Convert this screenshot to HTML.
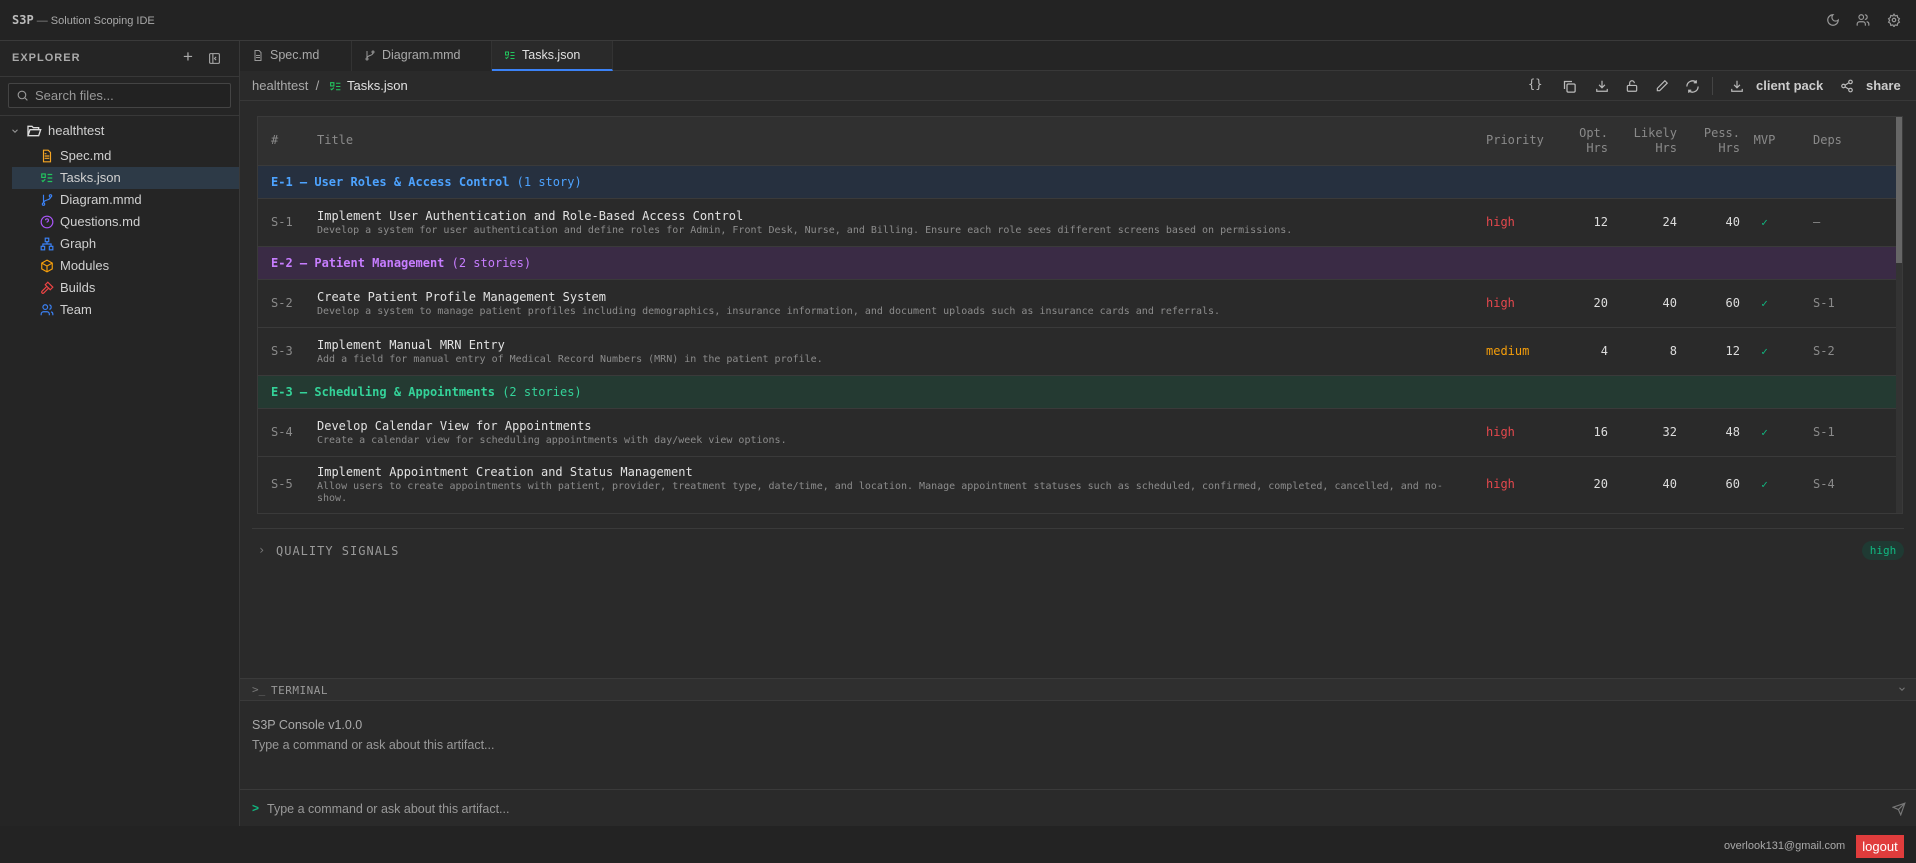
<!DOCTYPE html>
<html><head><meta charset="utf-8"><style>
*{box-sizing:border-box;margin:0;padding:0}
body{width:1916px;height:863px;background:#232323;font-family:"Liberation Sans",sans-serif;color:#ccc;position:relative;overflow:hidden}
.a{position:absolute}
svg{display:block}
.tr{position:absolute;left:0;height:22px;line-height:22px;font-size:13px;color:#d0d0d0;width:239px}
.tr svg{position:absolute;left:40px;top:4px}
.tr span{position:absolute;left:60px}
.tab{position:absolute;top:0;height:30px;line-height:29px;font-size:12.5px;color:#aaa;border-right:1px solid #333;background:#252525}
.tab svg{position:absolute;top:8px;left:12px}
.tab span{position:absolute;left:30px}
table{border-collapse:collapse;width:100%;font-family:"DejaVu Sans Mono","Liberation Mono",monospace}
td{vertical-align:middle}
.hdr td{color:#8a8a8a;font-size:12px;line-height:15px;height:48px}
.ep td{font-size:12px;font-weight:bold;height:33px;padding-left:13px;border-top:1px solid #3a3a3a}
.ep span{font-weight:normal}
.st td{border-top:1px solid #3a3a3a;height:48px}
.t1{font-size:12px;color:#e2e2e2;line-height:16px}
.t2{font-size:10px;color:#8c8c8c;line-height:12px;margin-top:1px}
.num{text-align:right;font-size:12px;color:#ddd}
.hi{color:#e5484d;font-size:12px}.me{color:#f59e0b;font-size:12px}
.ck{color:#10b981;text-align:center;font-size:11px}
.dp{color:#8a8a8a;font-size:12px;padding-left:24px}
.id{color:#8a8a8a;font-size:12px;padding-left:13px}
</style></head><body>

<div class="a" style="left:0;top:0;width:1916px;height:41px;border-bottom:1px solid #3a3a3a">
  <div class="a" style="left:12px;top:13px;font-size:11px;color:#aaa;white-space:nowrap"><b style="font-family:'DejaVu Sans Mono',monospace;color:#bbb;font-size:12px">S3P</b> <span style="color:#888">—</span> Solution Scoping IDE</div>
  <svg class="a" style="left:1826px;top:13px" width="14" height="14" viewBox="0 0 24 24" fill="none" stroke="#999" stroke-width="2" stroke-linecap="round"><path d="M12 3a6 6 0 0 0 9 9 9 9 0 1 1-9-9z"/></svg>
  <svg class="a" style="left:1856px;top:13px" width="14" height="14" viewBox="0 0 24 24" fill="none" stroke="#999" stroke-width="2" stroke-linecap="round"><circle cx="9" cy="7" r="4"/><path d="M2 21v-2a4 4 0 0 1 4-4h6a4 4 0 0 1 4 4v2M16 3.1a4 4 0 0 1 0 7.8M22 21v-2a4 4 0 0 0-3-3.9"/></svg>
  <svg class="a" style="left:1887px;top:13px" width="14" height="14" viewBox="0 0 24 24" fill="none" stroke="#999" stroke-width="2"><circle cx="12" cy="12" r="3"/><path d="M12 2l2 3 3.5-.8.8 3.5 3 2-1.8 3 1.8 3-3 2-.8 3.5-3.5-.8-2 3-2-3-3.5.8-.8-3.5-3-2 1.8-3-1.8-3 3-2 .8-3.5 3.5.8z"/></svg>
</div>

<div class="a" style="left:0;top:41px;width:240px;height:785px;background:#252525;border-right:1px solid #383838">
  <div class="a" style="left:12px;top:11px;font-size:11px;font-weight:bold;letter-spacing:1px;color:#aaa">EXPLORER</div>
  <div class="a" style="left:183px;top:6px;font-size:17px;color:#aaa">+</div>
  <svg class="a" style="left:208px;top:11px" width="13" height="13" viewBox="0 0 24 24" fill="none" stroke="#aaa" stroke-width="2"><rect x="3" y="3" width="18" height="18" rx="2"/><path d="M9 3v18M15 9l-3 3 3 3"/></svg>
  <div class="a" style="left:0;top:35px;width:239px;height:1px;background:#383838"></div>
  <div class="a" style="left:8px;top:42px;width:223px;height:25px;border:1px solid #444;background:#222;border-radius:2px"></div>
  <svg class="a" style="left:16px;top:48px" width="13" height="13" viewBox="0 0 24 24" fill="none" stroke="#999" stroke-width="2"><circle cx="11" cy="11" r="7"/><path d="M21 21l-5-5"/></svg>
  <div class="a" style="left:35px;top:47px;font-size:13px;color:#999">Search files...</div>
  <div class="a" style="left:0;top:74px;width:239px;height:1px;background:#383838"></div>

  <div class="tr" style="top:79px"><svg style="left:10px;top:6px" width="10" height="10" viewBox="0 0 24 24" fill="none" stroke="#999" stroke-width="2.5"><path d="M6 9l6 6 6-6"/></svg><svg style="left:26px;top:3px" width="16" height="16" viewBox="0 0 24 24" fill="none" stroke="#ddd" stroke-width="2"><path d="M3 19V5h6l2 2h8v3M3 19l3-9h16l-3 9z"/></svg><span style="left:48px">healthtest</span></div>
  <div class="tr" style="top:104px"><svg width="14" height="14" viewBox="0 0 24 24" fill="none" stroke="#f5a524" stroke-width="2"><path d="M14 2H6v20h12V6z M8 12h8M8 16h8M8 8h3"/></svg><span>Spec.md</span></div>
  <div class="tr" style="top:126px;left:12px;width:227px;background:#2d3a47"><svg style="left:28px" width="14" height="14" viewBox="0 0 24 24" fill="none" stroke="#22c55e" stroke-width="2"><path d="M3 5h6v6H3zM13 6h8M13 12h8M13 18h8M3 16l2 2 4-4"/></svg><span style="left:48px">Tasks.json</span></div>
  <div class="tr" style="top:148px"><svg width="14" height="14" viewBox="0 0 24 24" fill="none" stroke="#3b82f6" stroke-width="2"><circle cx="6" cy="19" r="2"/><circle cx="18" cy="5" r="2"/><path d="M6 3v14M18 7c0 6-12 4-12 10"/></svg><span>Diagram.mmd</span></div>
  <div class="tr" style="top:170px"><svg width="14" height="14" viewBox="0 0 24 24" fill="none" stroke="#a855f7" stroke-width="2"><circle cx="12" cy="12" r="10"/><path d="M9.5 9a2.5 2.5 0 1 1 3.5 2.3c-.7.4-1 1-1 1.7M12 17h.01"/></svg><span>Questions.md</span></div>
  <div class="tr" style="top:192px"><svg width="14" height="14" viewBox="0 0 24 24" fill="none" stroke="#3b82f6" stroke-width="2"><rect x="9" y="2" width="6" height="6"/><rect x="2" y="16" width="6" height="6"/><rect x="16" y="16" width="6" height="6"/><path d="M12 8v4M5 16v-4h14v4"/></svg><span>Graph</span></div>
  <div class="tr" style="top:214px"><svg width="14" height="14" viewBox="0 0 24 24" fill="none" stroke="#f59e0b" stroke-width="2"><path d="M12 2l9 5v10l-9 5-9-5V7zM3 7l9 5 9-5M12 12v10"/></svg><span>Modules</span></div>
  <div class="tr" style="top:236px"><svg width="14" height="14" viewBox="0 0 24 24" fill="none" stroke="#ef4444" stroke-width="2"><path d="M15 12l-8.5 8.5a2 2 0 0 1-3-3L12 9M17.6 15L22 10.6 13.4 2 9 6.4z"/></svg><span>Builds</span></div>
  <div class="tr" style="top:258px"><svg width="14" height="14" viewBox="0 0 24 24" fill="none" stroke="#3b82f6" stroke-width="2"><circle cx="9" cy="7" r="4"/><path d="M2 21v-2a4 4 0 0 1 4-4h6a4 4 0 0 1 4 4v2M16 3.1a4 4 0 0 1 0 7.8M22 21v-2a4 4 0 0 0-3-3.9"/></svg><span>Team</span></div>
</div>

<div class="a" style="left:240px;top:41px;width:1676px;height:785px;background:#2a2a2a">
  <div class="a" style="left:0;top:0;width:1676px;height:30px;background:#252525;border-bottom:1px solid #383838"></div>
  <div class="tab" style="left:0;width:112px"><svg width="12" height="13" viewBox="0 0 24 24" fill="none" stroke="#999" stroke-width="2"><path d="M14 2H6v20h12V6zM8 12h8M8 16h8"/></svg><span>Spec.md</span></div>
  <div class="tab" style="left:112px;width:140px"><svg width="12" height="13" viewBox="0 0 24 24" fill="none" stroke="#999" stroke-width="2"><circle cx="6" cy="19" r="2"/><circle cx="18" cy="5" r="2"/><path d="M6 3v14M18 7c0 6-12 4-12 10"/></svg><span>Diagram.mmd</span></div>
  <div class="tab" style="left:252px;width:121px;background:#2a2a2a;color:#e0e0e0;border-bottom:2px solid #3b82f6"><svg width="12" height="13" viewBox="0 0 24 24" fill="none" stroke="#22c55e" stroke-width="2"><path d="M3 5h6v6H3zM13 6h8M13 12h8M13 18h8M3 16l2 2 4-4"/></svg><span>Tasks.json</span></div>

  <div class="a" style="left:0;top:30px;width:1676px;height:30px;border-bottom:1px solid #383838"></div>
  <div class="a" style="left:12px;top:37px;font-size:13px;color:#aaa;white-space:nowrap">healthtest &nbsp;/&nbsp;</div>
  <svg class="a" style="left:89px;top:39px" width="13" height="13" viewBox="0 0 24 24" fill="none" stroke="#22c55e" stroke-width="2"><path d="M3 5h6v6H3zM13 6h8M13 12h8M13 18h8M3 16l2 2 4-4"/></svg>
  <div class="a" style="left:107px;top:37px;font-size:13px;color:#e0e0e0">Tasks.json</div>

  <div class="a" style="left:1288px;top:36px;font-size:12px;color:#bbb;font-family:'DejaVu Sans Mono',monospace">{}</div>
  <svg class="a" style="left:1322px;top:38px" width="15" height="15" viewBox="0 0 24 24" fill="none" stroke="#bbb" stroke-width="2"><rect x="8" y="8" width="13" height="13" rx="2"/><path d="M4 16V4h12"/></svg>
  <svg class="a" style="left:1355px;top:38px" width="14" height="14" viewBox="0 0 24 24" fill="none" stroke="#bbb" stroke-width="2"><path d="M12 3v12M7 10l5 5 5-5M3 17v4h18v-4"/></svg>
  <svg class="a" style="left:1385px;top:38px" width="14" height="14" viewBox="0 0 24 24" fill="none" stroke="#bbb" stroke-width="2"><rect x="4" y="11" width="16" height="10" rx="2"/><path d="M8 11V7a4 4 0 0 1 8 0"/></svg>
  <svg class="a" style="left:1415px;top:38px" width="14" height="14" viewBox="0 0 24 24" fill="none" stroke="#bbb" stroke-width="2"><path d="M17 3l4 4L8 20H4v-4z"/></svg>
  <svg class="a" style="left:1445px;top:38px" width="15" height="15" viewBox="0 0 24 24" fill="none" stroke="#bbb" stroke-width="2"><path d="M21 12a9 9 0 0 1-15.5 6.2M3 12a9 9 0 0 1 15.5-6.2M18 2v4h-4M6 22v-4h4"/></svg>
  <div class="a" style="left:1472px;top:36px;width:1px;height:18px;background:#444"></div>
  <svg class="a" style="left:1490px;top:38px" width="14" height="14" viewBox="0 0 24 24" fill="none" stroke="#bbb" stroke-width="2"><path d="M12 3v12M7 10l5 5 5-5M3 17v4h18v-4"/></svg>
  <div class="a" style="left:1516px;top:37px;font-size:13px;font-weight:bold;color:#ccc">client pack</div>
  <svg class="a" style="left:1600px;top:38px" width="14" height="14" viewBox="0 0 24 24" fill="none" stroke="#bbb" stroke-width="2"><circle cx="18" cy="5" r="3"/><circle cx="6" cy="12" r="3"/><circle cx="18" cy="19" r="3"/><path d="M8.6 13.5l6.8 4M15.4 6.5l-6.8 4"/></svg>
  <div class="a" style="left:1626px;top:37px;font-size:13px;font-weight:bold;color:#ccc">share</div>

  <div class="a" style="left:17px;top:75px;width:1646px;height:398px;border:1px solid #3a3a3a;background:#2a2a2a;overflow:hidden">
    <div class="a" style="left:1638px;top:0;width:6px;height:396px;background:#333"></div>
    <div class="a" style="left:1638px;top:0;width:6px;height:146px;background:#666"></div>
    <table style="width:1638px;table-layout:fixed">
      <colgroup><col style="width:59px"><col style="width:1169px"><col style="width:80px"><col style="width:42px"><col style="width:69px"><col style="width:63px"><col style="width:49px"><col></colgroup>
      <tr class="hdr" style="background:#303030"><td class="id">#</td><td>Title</td><td>Priority</td><td class="num" style="color:#8a8a8a">Opt.<br>Hrs</td><td class="num" style="color:#8a8a8a">Likely<br>Hrs</td><td class="num" style="color:#8a8a8a">Pess.<br>Hrs</td><td style="text-align:center">MVP</td><td style="padding-left:24px">Deps</td></tr>
      <tr class="ep" style="background:#26303f;color:#4da3ff"><td colspan="8">E-1 — User Roles &amp; Access Control <span>(1 story)</span></td></tr>
      <tr class="st"><td class="id">S-1</td><td><div class="t1">Implement User Authentication and Role-Based Access Control</div><div class="t2">Develop a system for user authentication and define roles for Admin, Front Desk, Nurse, and Billing. Ensure each role sees different screens based on permissions.</div></td><td class="hi">high</td><td class="num">12</td><td class="num">24</td><td class="num">40</td><td class="ck">✓</td><td class="dp">—</td></tr>
      <tr class="ep" style="background:#3a2b45;color:#c77dff"><td colspan="8">E-2 — Patient Management <span>(2 stories)</span></td></tr>
      <tr class="st"><td class="id">S-2</td><td><div class="t1">Create Patient Profile Management System</div><div class="t2">Develop a system to manage patient profiles including demographics, insurance information, and document uploads such as insurance cards and referrals.</div></td><td class="hi">high</td><td class="num">20</td><td class="num">40</td><td class="num">60</td><td class="ck">✓</td><td class="dp">S-1</td></tr>
      <tr class="st"><td class="id">S-3</td><td><div class="t1">Implement Manual MRN Entry</div><div class="t2">Add a field for manual entry of Medical Record Numbers (MRN) in the patient profile.</div></td><td class="me">medium</td><td class="num">4</td><td class="num">8</td><td class="num">12</td><td class="ck">✓</td><td class="dp">S-2</td></tr>
      <tr class="ep" style="background:#243a32;color:#34d399"><td colspan="8">E-3 — Scheduling &amp; Appointments <span>(2 stories)</span></td></tr>
      <tr class="st"><td class="id">S-4</td><td><div class="t1">Develop Calendar View for Appointments</div><div class="t2">Create a calendar view for scheduling appointments with day/week view options.</div></td><td class="hi">high</td><td class="num">16</td><td class="num">32</td><td class="num">48</td><td class="ck">✓</td><td class="dp">S-1</td></tr>
      <tr class="st"><td class="id">S-5</td><td style="height:56px;padding-right:40px"><div class="t1">Implement Appointment Creation and Status Management</div><div class="t2">Allow users to create appointments with patient, provider, treatment type, date/time, and location. Manage appointment statuses such as scheduled, confirmed, completed, cancelled, and no-show.</div></td><td class="hi">high</td><td class="num">20</td><td class="num">40</td><td class="num">60</td><td class="ck">✓</td><td class="dp">S-4</td></tr>
    </table>
  </div>

  <div class="a" style="left:12px;top:487px;width:1652px;height:1px;background:#3a3a3a"></div>
  <div class="a" style="left:18px;top:502px;font-size:12px;color:#777;font-family:'DejaVu Sans Mono',monospace">›</div>
  <div class="a" style="left:36px;top:503px;font-size:12px;color:#999;letter-spacing:1px;font-family:'DejaVu Sans Mono',monospace">QUALITY SIGNALS</div>
  <div class="a" style="left:1622px;top:500px;width:42px;height:19px;border-radius:10px;background:#1f3a33;color:#10b981;font-size:11px;line-height:19px;text-align:center;font-family:'DejaVu Sans Mono',monospace">high</div>

  <div class="a" style="left:0;top:637px;width:1676px;height:23px;background:#2f2f2f;border-top:1px solid #3a3a3a;border-bottom:1px solid #3a3a3a"></div>
  <div class="a" style="left:12px;top:642px;font-size:11px;color:#777;font-family:'DejaVu Sans Mono',monospace">&gt;_</div>
  <div class="a" style="left:31px;top:643px;font-size:11px;color:#999;letter-spacing:.5px;font-family:'DejaVu Sans Mono',monospace">TERMINAL</div>
  <svg class="a" style="left:1657px;top:643px" width="10" height="10" viewBox="0 0 24 24" fill="none" stroke="#777" stroke-width="2.5"><path d="M6 9l6 6 6-6"/></svg>
  <div class="a" style="left:12px;top:677px;font-size:12.5px;color:#aaa">S3P Console v1.0.0</div>
  <div class="a" style="left:12px;top:697px;font-size:12.5px;color:#999">Type a command or ask about this artifact...</div>
  <div class="a" style="left:0;top:748px;width:1676px;height:1px;background:#3a3a3a"></div>
  <div class="a" style="left:12px;top:760px;font-size:12px;color:#10b981;font-weight:bold">&gt;</div>
  <div class="a" style="left:27px;top:761px;font-size:12.5px;color:#999">Type a command or ask about this artifact...</div>
  <svg class="a" style="left:1652px;top:761px" width="14" height="14" viewBox="0 0 24 24" fill="none" stroke="#777" stroke-width="2"><path d="M22 2L11 13M22 2l-7 20-4-9-9-4z"/></svg>
</div>

<div class="a" style="left:0;top:826px;width:1916px;height:37px;background:#232323"></div>
<div class="a" style="left:1724px;top:840px;font-size:11px;color:#aaa">overlook131@gmail.com</div>
<div class="a" style="left:1856px;top:835px;width:48px;height:23px;background:#e03c3c;color:#fff;font-size:13px;line-height:23px;text-align:center">logout</div>
</body></html>
